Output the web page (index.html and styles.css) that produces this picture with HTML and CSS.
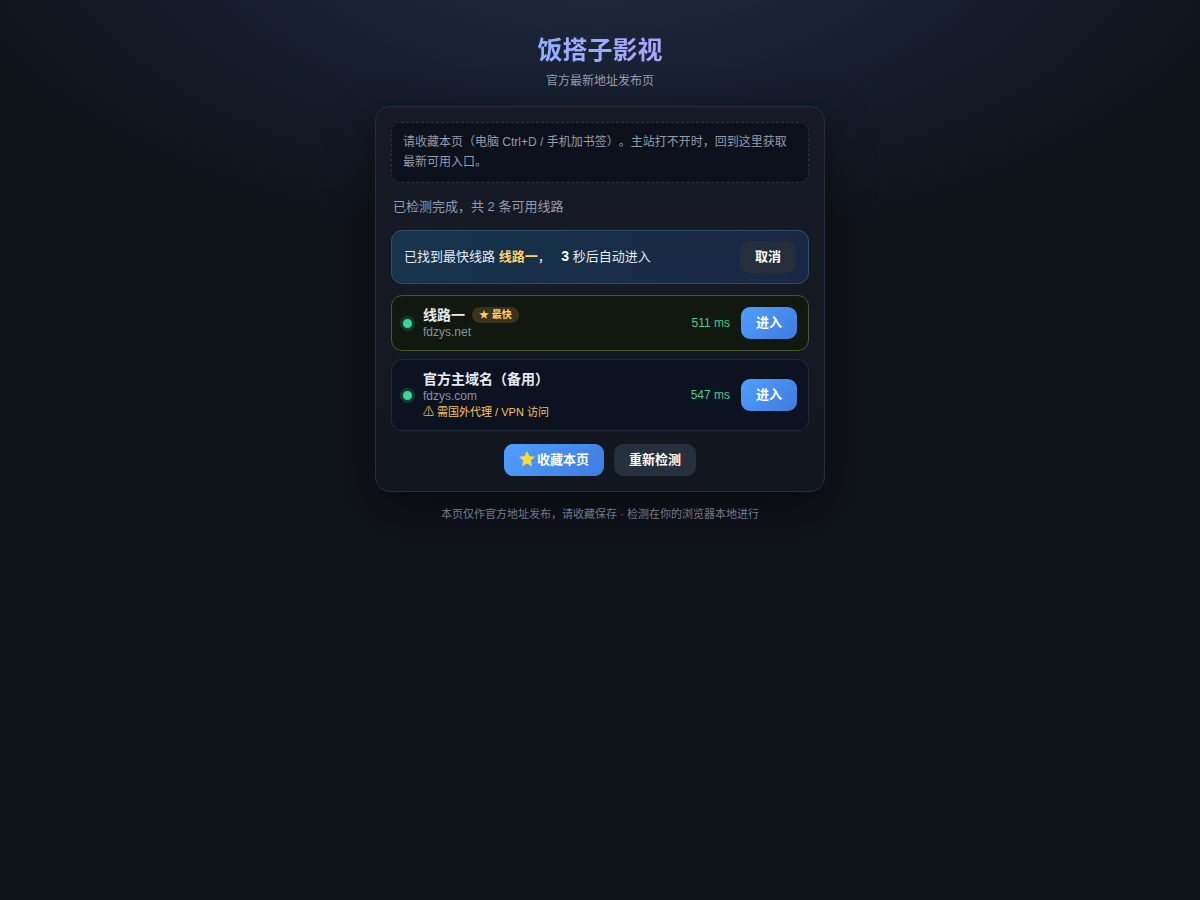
FILE: index.html
```html
<!DOCTYPE html>
<html lang="zh-CN">
<head>
<meta charset="utf-8">
<meta name="viewport" content="width=device-width, initial-scale=1">
<title>饭搭子影视</title>
<link rel="stylesheet" href="styles.css">
</head>
<body>
<main class="page">
  <header class="header">
    <h1 class="title">饭搭子影视</h1>
    <p class="subtitle">官方最新地址发布页</p>
  </header>
  <section class="card">
    <p class="notice">请收藏本页（电脑 Ctrl+D / 手机加书签）。主站打不开时，回到这里获取最新可用入口。</p>
    <p class="status">已检测完成，共 2 条可用线路</p>
    <div class="banner">
      <p class="banner-text">已找到最快线路 <strong class="fastest">线路一</strong>， <strong class="count">3</strong> 秒后自动进入</p>
      <button class="btn btn-cancel" type="button">取消</button>
    </div>
    <ul class="lines">
      <li class="line line-best">
        <span class="dot"></span>
        <div class="info">
          <div class="name">线路一<span class="badge">★ 最快</span></div>
          <div class="host">fdzys.net</div>
        </div>
        <span class="ping">511 ms</span>
        <button class="btn btn-primary" type="button">进入</button>
      </li>
      <li class="line">
        <span class="dot"></span>
        <div class="info">
          <div class="name">官方主域名（备用）</div>
          <div class="host">fdzys.com</div>
          <div class="warn">⚠ 需国外代理 / VPN 访问</div>
        </div>
        <span class="ping">547 ms</span>
        <button class="btn btn-primary" type="button">进入</button>
      </li>
    </ul>
    <div class="actions">
      <button class="btn btn-primary" type="button"><svg class="star" viewBox="0 0 16 16" aria-hidden="true"><path d="M8 .8l2.1 4.8 5.2.5-3.9 3.5 1.1 5.2L8 12.1l-4.5 2.7 1.1-5.2L.7 6.1l5.2-.5z" fill="#fdd835" stroke="#fdd835" stroke-width=".8" stroke-linejoin="round"/></svg>收藏本页</button>
      <button class="btn btn-secondary" type="button">重新检测</button>
    </div>
  </section>
  <footer class="footer">本页仅作官方地址发布，请收藏保存 · 检测在你的浏览器本地进行</footer>
</main>
</body>
</html>
```

FILE: styles.css
```css
* {
  box-sizing: border-box;
}

body {
  margin: 0;
  min-height: 100vh;
  color: #e6eaf2;
  font-family: "Liberation Sans", "Noto Sans CJK SC", sans-serif;
  font-size: 13px;
  text-spacing-trim: space-all;
  background: radial-gradient(1124px 562px at 50% -90px, #222d48, transparent 60%) no-repeat #0f131a;
}

h1, p, ul {
  margin: 0;
  padding: 0;
}

.page {
  max-width: 480px;
  margin: 0 auto;
  padding: 32px 15px;
}

.header {
  margin-bottom: 16px;
  text-align: center;
}

.title {
  width: fit-content;
  margin: 0 auto 4px;
  font-size: 25px;
  line-height: 36px;
  color: transparent;
  background: linear-gradient(90deg, #92b0ff, #a9a4fb);
  background-clip: text;
}

.subtitle {
  font-size: 12px;
  line-height: 18px;
  color: #939cad;
}

.card {
  padding: 15px;
  border: 1px solid #282d39;
  border-radius: 15px;
  background: linear-gradient(180deg, #181b26, #12171f);
  box-shadow: 0 16px 48px rgba(0, 0, 0, 0.45);
}

.notice {
  padding: 9px 11px 10px;
  border: 1px dashed #2a3140;
  border-radius: 10px;
  background: #0c111c;
  font-size: 12px;
  line-height: 20px;
  color: #939cad;
}

.status {
  padding: 14px 2px;
  line-height: 19px;
  color: #939cad;
}

.banner {
  display: flex;
  align-items: center;
  justify-content: space-between;
  gap: 10px;
  padding: 10px 12px;
  border: 1px solid #28506f;
  border-radius: 11px;
  background: linear-gradient(90deg, #16344c, #1a2744);
}

.banner-text {
  padding-bottom: 2px;
  line-height: 20px;
}

.fastest {
  color: #ffd166;
}

.count {
  margin-left: 7px;
  font-size: 14px;
  color: #fff;
}

.btn {
  display: inline-flex;
  align-items: center;
  justify-content: center;
  gap: 2px;
  height: 32px;
  padding: 0 15px 3px;
  border: 0;
  border-radius: 9px;
  font: inherit;
  font-weight: 700;
  color: #fff;
  cursor: pointer;
}

.btn-primary {
  background: linear-gradient(135deg, #4f9fff, #3f7bdd);
}

.btn-secondary {
  background: #26303d;
}

.btn-cancel {
  background: #272e3b;
}

.lines {
  display: grid;
  gap: 8px;
  margin-top: 11px;
  list-style: none;
}

.line {
  display: flex;
  align-items: center;
  gap: 11px;
  padding: 10px 11px;
  border: 1px solid #222838;
  border-radius: 11px;
  background: #0d1220;
}

.line-best {
  border-color: #43582f;
  background: #11180f;
}

.dot {
  width: 9px;
  height: 9px;
  border-radius: 50%;
  background: #3ed598;
  box-shadow: 0 0 0 3px #123c2f;
}

.info {
  flex: 1;
  min-width: 0;
}

.name {
  display: flex;
  align-items: center;
  gap: 7px;
  font-size: 14px;
  line-height: 18px;
  font-weight: 700;
}

.badge {
  padding: 0 7px;
  border-radius: 8px;
  background: #3a341d;
  font-size: 10px;
  line-height: 16px;
  color: #ffd166;
}

.host {
  font-size: 12px;
  line-height: 16px;
  color: #8791a3;
}

.warn {
  font-size: 11px;
  line-height: 16px;
  color: #f0c558;
}

.ping {
  font-size: 12px;
  color: #3ecb8f;
}

.actions {
  display: flex;
  flex-wrap: wrap;
  justify-content: center;
  gap: 10px;
  margin-top: 13px;
}

.star {
  width: 16px;
  height: 16px;
}

.footer {
  margin-top: 14px;
  font-size: 11px;
  line-height: 16px;
  text-align: center;
  color: #737b8b;
}
```
